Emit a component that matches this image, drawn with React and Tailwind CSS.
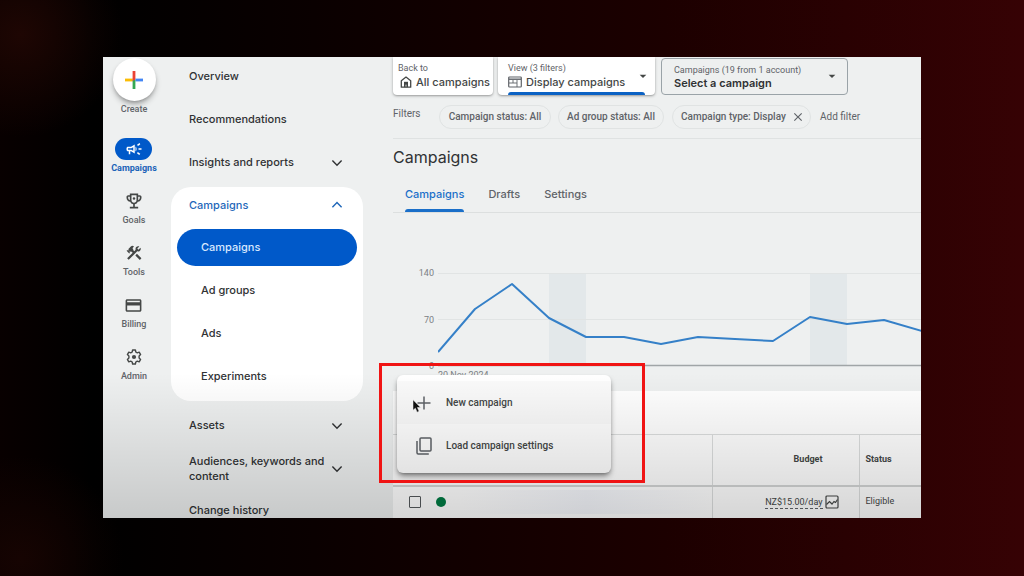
import {
  MdArrowDropDown,
  MdClose,
  MdConstruction,
  MdOutlineCampaign,
  MdOutlineCreditCard,
  MdOutlineEmojiEvents,
} from "react-icons/md";

const chartPoints = [
  [0, 79], [37, 36], [74, 11], [111, 45], [148, 64], [186, 64], [223, 71],
  [260, 64], [297, 66], [335, 68], [372, 44], [409, 51], [446, 47], [484, 58],
];

const PlusLogo = () => (
  <svg className="size-5" viewBox="0 0 20 20" aria-hidden="true">
    <path fill="#ea4335" d="M8.6 1h2.8v9H8.6z" />
    <path fill="#fbbc04" d="M1 8.6h7.6v2.8H1z" />
    <path fill="#4285f4" d="M11.4 8.6H19v2.8h-7.6z" />
    <path fill="#34a853" d="M8.6 10h2.8v9H8.6z" />
    <path fill="#ea4335" d="M8.6 8.6h2.8l-2.8 2.8z" />
  </svg>
);

const GoalsIcon = () => (
  <span className="relative">
    <MdOutlineEmojiEvents className="size-5" />
    <svg className="absolute inset-0 size-5" viewBox="0 0 20 20" aria-hidden="true">
      <circle cx="10" cy="7.5" r="1.2" fill="currentColor" />
    </svg>
  </span>
);

const ToolsIcon = () => <MdConstruction className="size-[18px]" />;

const BillingIcon = () => <MdOutlineCreditCard className="size-[19px]" />;

const AdminIcon = () => (
  <svg className="size-4" viewBox="0 0 16 16" fill="none" stroke="currentColor" strokeWidth="1.4" strokeLinejoin="round" aria-hidden="true">
    <path d="M6.6 1h2.8l.4 2 1.5.9 1.9-.7 1.4 2.4-1.5 1.4v2l1.5 1.4-1.4 2.4-1.9-.7-1.500.9-.4 2H6.600l-.4-2-1.500-.9-1.900.7-1.400-2.400L2.900 9V7L1.400 5.600l1.400-2.400 1.900.7L6.200 3z" />
    <circle cx="8" cy="8" r="2.100" fill="currentColor" stroke="none" />
  </svg>
);

const railItems = [
  { label: "Goals", icon: GoalsIcon },
  { label: "Tools", icon: ToolsIcon },
  { label: "Billing", icon: BillingIcon },
  { label: "Admin", icon: AdminIcon },
];

const Chevron = ({ up }) => (
  <svg className="h-2 w-3 shrink-0" viewBox="0 0 12 8" fill="none" stroke="currentColor" strokeWidth="1.4" aria-hidden="true">
    <path d={up ? "M1.4 6.300 6 1.600l4.600 4.700" : "M1.4 1.600 6 6.300l4.600-4.700"} />
  </svg>
);

const HomeIcon = () => (
  <svg className="size-3 shrink-0" viewBox="0 0 12 12" fill="none" stroke="#444746" aria-hidden="true">
    <path strokeWidth="1.3" strokeLinejoin="round" d="M1.3 11.2V4.7L6 1.1l4.7 3.6v6.5z" />
    <path fill="#444746" stroke="none" d="M4 5.8h4v5.4H4z" />
    <path stroke="#fff" strokeWidth=".8" d="M6 8.6v2" />
  </svg>
);

const DisplayIcon = () => (
  <svg className="h-3 w-3.5 shrink-0" viewBox="0 0 14 12" fill="none" stroke="#5f6368" aria-hidden="true">
    <rect x=".7" y="1" width="12.6" height="10" rx=".8" strokeWidth="1.2" />
    <path strokeWidth="1.4" d="M1 3.2h12" />
    <path strokeWidth=".9" d="M1 7h8M9 4v7M5 4v3" />
  </svg>
);

const CopyIcon = () => (
  <svg className="h-[18px] w-4" viewBox="0 0 16 18" fill="none" stroke="#5f6368" strokeWidth="1.5" aria-hidden="true">
    <rect x="4" y="1" width="11" height="13" rx="1" />
    <path d="M1 4v11.8c0 .7.5 1.2 1.2 1.2h10.6" />
  </svg>
);

const ChartBoxIcon = () => (
  <svg className="size-3.5 shrink-0" viewBox="0 0 14 14" fill="none" stroke="#444746" aria-hidden="true">
    <rect x="1" y="1" width="12" height="12" rx="1" strokeWidth="1.2" />
    <path strokeWidth="1.2" d="m1.5 9.5 3-3L7 9l2-2.5 1.5 1 2-3" />
  </svg>
);

const Cursor = () => (
  <svg className="absolute left-[15px] top-6 h-3.5 w-2.5" viewBox="0 0 10 14" aria-hidden="true">
    <path fill="#111" stroke="#fff" strokeWidth=".5" d="M1 .8v10.4l2.4-2 1.7 4 2-.9-1.7-3.800h3.200z" />
  </svg>
);

const Rail = () => (
  <nav className="flex w-[62px] shrink-0 flex-col items-center pt-px text-[9px] font-medium leading-4 text-[#5f6368]">
    <button className="mb-[21px] flex flex-col items-center">
      <span className="flex size-[43px] items-center justify-center rounded-full bg-white shadow-md shadow-black/30">
        <PlusLogo />
      </span>
      Create
    </button>
    <a href="#campaigns" className="mb-3.5 flex flex-col items-center font-bold text-[#1a63b8]">
      <span className="flex h-[22px] w-[37px] items-center justify-center rounded-full bg-[#0059c9] text-white">
        <MdOutlineCampaign className="size-[18px]" />
      </span>
      Campaigns
    </a>
    {railItems.map(({ label, icon: Icon }) => (
      <a key={label} href="#rail" className="mb-3.5 flex flex-col items-center">
        <span className="flex h-[22px] items-center text-[#444746]">
          <Icon />
        </span>
        {label}
      </a>
    ))}
  </nav>
);

const NavItem = ({ label, expandable }) => (
  <a href="#nav" className="flex h-[43px] items-center justify-between pl-[18px] pr-5">
    <span className="leading-[15px]">{label}</span>
    {expandable && <Chevron />}
  </a>
);

const NavSub = ({ label }) => (
  <a href="#sub" className="flex h-[43px] items-center pl-6">
    {label}
  </a>
);

const SideNav = () => (
  <nav className="-mt-0.5 ml-1.5 w-[192px] shrink-0 font-['Inter',sans-serif] text-[11px] font-medium text-[#303234]">
    <NavItem label="Overview" />
    <NavItem label="Recommendations" />
    <NavItem label="Insights and reports" expandable />

    {/* Open section */}
    <div className="my-[3px] rounded-[20px] bg-white px-1.5 pb-[3px]">
      <a href="#section" className="flex h-9 items-center justify-between pl-3 pr-3.5 text-[#1f67b9]">
        Campaigns
        <Chevron up />
      </a>
      <a href="#campaigns" className="mb-[3px] mt-1.5 flex h-[37px] items-center rounded-full bg-[#0059c9] pl-6 text-[#d8e8ff]">
        Campaigns
      </a>
      <NavSub label="Ad groups" />
      <NavSub label="Ads" />
      <NavSub label="Experiments" />
    </div>

    <NavItem label="Assets" expandable />
    <NavItem label="Audiences, keywords and content" expandable />
    <a href="#history" className="flex h-7 items-center pl-[18px] pt-3 leading-none">
      Change history
    </a>
  </nav>
);

const Scope = () => (
  <div className="flex h-[38px] text-[9px] leading-3 text-[#5f6368]">
    <a href="#all" className="mr-[5px] block w-[100px] rounded-b bg-white pl-[5px] pt-[5px] shadow shadow-black/30">
      Back to
      <span className="flex items-center gap-1 whitespace-nowrap pl-0.5 font-['Inter',sans-serif] text-[11px] font-medium leading-4 text-[#444746]">
        <HomeIcon />
        All campaigns
      </span>
    </a>

    <div className="relative mr-1.5 w-[157px] rounded-b bg-white px-2.5 pt-[5px] shadow shadow-black/30">
      <label htmlFor="view" className="block">View (3 filters)</label>
      <div className="flex items-center gap-1">
        <DisplayIcon />
        <select id="view" className="h-4 flex-1 appearance-none bg-transparent font-['Inter',sans-serif] text-[11px] font-medium leading-4 text-[#444746]">
          <option>Display campaigns</option>
        </select>
      </div>
      <MdArrowDropDown className="pointer-events-none absolute right-1 top-[11px] size-4 text-[#444746]" />
      <div className="absolute inset-x-2.5 bottom-0 h-[3px] rounded-t bg-[#0b62c4]" />
    </div>

    <div className="relative mt-px w-[187px] rounded-sm border border-[#9aa3a8] px-3 pt-[5px]">
      <label htmlFor="campaign" className="block">Campaigns (19 from 1 account)</label>
      <select id="campaign" className="block h-[14px] w-full appearance-none bg-transparent font-['Inter',sans-serif] text-[11px] font-semibold leading-[14px] text-[#303234]">
        <option>Select a campaign</option>
      </select>
      <MdArrowDropDown className="pointer-events-none absolute right-[7px] top-[9px] size-4 text-[#444746]" />
    </div>
  </div>
);

const Filters = () => (
  <div className="flex h-11 items-center whitespace-nowrap border-b border-[#dfe2e2] text-[10px] text-[#5f6368]">
    <span className="w-[46px] pb-1.5">Filters</span>
    <button className="mr-[7px] h-6 w-28 rounded-full border border-[#e0e3e3] font-medium">Campaign status: All</button>
    <button className="mr-2 h-6 w-[106px] rounded-full border border-[#e0e3e3] font-medium">Ad group status: All</button>
    <button className="mr-[9px] flex h-6 w-[139px] items-center justify-between rounded-full border border-[#e0e3e3] pl-2 pr-[5px] font-medium">
      Campaign type: Display
      <MdClose className="size-3.5" />
    </button>
    <button>Add filter</button>
  </div>
);

const Chart = () => (
  <div className="flex h-[178px] pt-[60px] text-[9px] leading-3 text-[#7b8084]">
    <div className="-mt-1.5 flex h-[105px] w-[41px] flex-col justify-between text-right">
      <span>140</span>
      <span>70</span>
      <span>0</span>
    </div>
    <div className="ml-1 min-w-0 flex-1">
      <svg className="h-[94px] w-full" viewBox="0 0 483 94" preserveAspectRatio="none" role="img" aria-label="Campaign performance">
        <path fill="#e3e8ea" d="M111 0h37v92h-37zM372 0h37v92h-37z" />
        <path stroke="#e1e4e4" d="M0 .5h483M0 46.5h483" />
        <path stroke="#a0a5a7" strokeWidth="1.5" d="M0 92.5h483" />
        <polyline
          points={chartPoints.join(" ")}
          fill="none"
          stroke="#3580c8"
          strokeWidth="2"
          strokeLinejoin="round"
          vectorEffect="non-scaling-stroke"
        />
      </svg>
      <div className="pt-0.5">20 Nov 2024</div>
    </div>
  </div>
);

const CampaignTable = () => (
  <table className="w-full table-fixed bg-white text-[9px] text-[#444746]">
    <thead>
      <tr className="h-[51px] border-b-2 border-t border-b-[#d3d5d5] border-t-[#dcdede]">
        <th />
        <th className="w-[147px] border-x border-[#dcdede] pr-9 text-right font-bold">Budget</th>
        <th className="w-[62px] pl-1.5 text-left font-bold">Status</th>
      </tr>
    </thead>
    <tbody>
      <tr className="h-8">
        <td>
          <div className="flex items-center gap-[15px] pl-4">
            <input
              type="checkbox"
              aria-label="Select row"
              className="size-3 appearance-none rounded-[1px] border border-[#55595c]"
            />
            <span className="size-2.5 rounded-full bg-[#007a43]" />
            <span className="h-6 flex-1 bg-linear-to-r from-transparent via-[#f4f6fb] to-transparent" />
          </div>
        </td>
        <td className="border-x border-[#dcdede] pr-5">
          <div className="flex items-center justify-end gap-0.5">
            <a href="#budget" className="border-b border-dashed border-[#5f6368] leading-3">NZ$15.00/day</a>
            <ChartBoxIcon />
          </div>
        </td>
        <td className="pl-1.5">Eligible</td>
      </tr>
    </tbody>
  </table>
);

const CreateMenu = () => (
  <div className="absolute left-1 top-[318px] w-[214px] rounded-md bg-white py-1.5 text-[10px] font-medium text-[#444746] shadow-md shadow-black/40">
    <button className="flex h-[43px] w-full items-center gap-3.5 bg-black/2 pl-[19px]">
      <svg className="size-4" viewBox="0 0 16 16" stroke="#5f6368" strokeWidth="1.5" aria-hidden="true">
        <path d="M8 1.5v13M1.5 8h13" />
      </svg>
      New campaign
    </button>
    <button className="flex h-[43px] w-full items-center gap-3.5 pl-[19px]">
      <CopyIcon />
      Load campaign settings
    </button>
    <Cursor />
  </div>
);

export default function App() {
  return (
    <div className="min-h-screen bg-[radial-gradient(circle_at_2%_6%,#1e0603_0,transparent_9%),radial-gradient(circle_at_2%_97%,#160402_0,transparent_9%),linear-gradient(to_right,#080000_0%,#000_9%,#0c0000_35%,#1c0000_65%,#360204_100%)] px-[103px] py-[57px] font-['Roboto',sans-serif]">
      <div className="relative flex overflow-hidden bg-[#eef0f0]">
        <Rail />
        <SideNav />

        <main className="relative ml-[30px] min-w-0 flex-1">
          <Scope />
          <Filters />
          <h1 className="pt-1.5 font-['Inter',sans-serif] text-base leading-6 text-[#303234]">Campaigns</h1>
          <div className="flex h-11 gap-6 border-b border-[#dcdfdf] pl-3 font-['Inter',sans-serif] text-[11px] font-medium text-[#5f6368]">
            <button className="relative pt-2 text-[#1a6fc9]">
              Campaigns
              <span className="absolute inset-x-0 bottom-0 h-[3px] rounded-t bg-[#1a6fc9]" />
            </button>
            <button className="pt-2">Drafts</button>
            <button className="pt-2">Settings</button>
          </div>
          <Chart />
          <div className="h-[43px] bg-white" />
          <CampaignTable />
          <CreateMenu />
        </main>

        {/* Shade along the lower edge */}
        <div className="pointer-events-none absolute inset-x-0 bottom-0 h-[145px] bg-linear-to-b from-transparent to-black/16" />

        {/* Highlight around the menu */}
        <div className="pointer-events-none absolute left-[276px] top-[306px] h-[120px] w-[266px] border-3 border-[#f01414]" />
      </div>
    </div>
  );
}
